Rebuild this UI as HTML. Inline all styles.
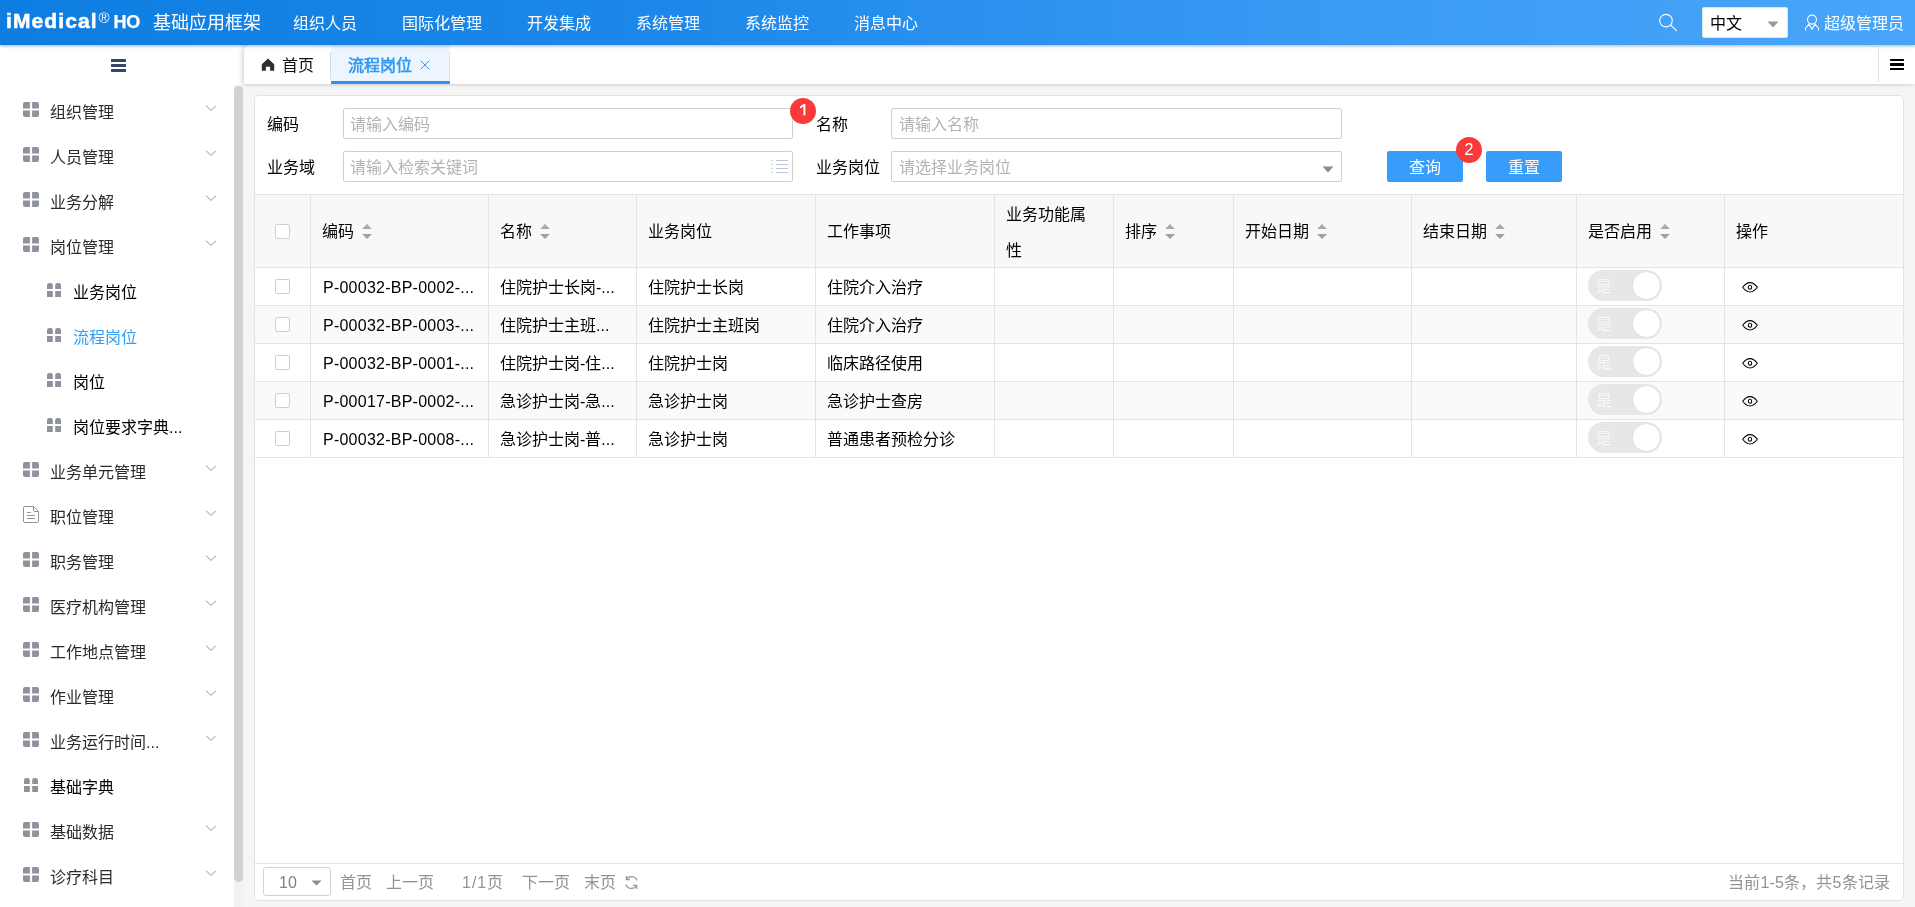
<!DOCTYPE html>
<html lang="zh-CN">
<head>
<meta charset="utf-8">
<title>iMedical HO</title>
<style>
*{box-sizing:border-box;margin:0;padding:0}
html,body{width:1915px;height:907px;overflow:hidden;background:#f5f5f5;font-family:"Liberation Sans",sans-serif;font-size:16px;color:#000}
#root{left:0;top:0;width:1915px;height:907px;will-change:transform;background:#f5f5f5}
div,span,svg{position:absolute}
.t{white-space:nowrap;line-height:20px;height:20px;font-size:16px}
#top{left:0;top:0;width:1915px;height:45px;background:linear-gradient(90deg,#0d7de1 0%,#1d88e9 35%,#3a9bf4 70%,#48a5f9 100%);box-shadow:0 1px 3px rgba(0,70,150,.4);z-index:10}
#top .t{color:#fff}
#side{left:0;top:45px;width:234px;height:862px;background:#fff}
#strack{left:234px;top:85px;width:9px;height:822px;background:#f2f2f2}
#sidex{left:234px;top:45px;width:10px;height:40px;background:#fff}
#sthumb{left:234px;top:86px;width:9px;height:796px;background:#d2d2d2;border-radius:5px}
.mi{color:#2b2b2b}
.mi.act{color:#339ef3}
#tabs{left:244px;top:45px;width:1671px;height:39px;background:#fff;border-top-left-radius:6px;box-shadow:0 1px 3px rgba(0,0,0,.10),-3px 0 5px rgba(0,0,0,.10)}
#panel{left:254px;top:95px;width:1650px;height:806px;background:#fff;border:1px solid #e3e3e3;border-radius:5px}
.inp{height:31px;border:1px solid #cfcfcf;border-radius:2px;background:#fff}
.ph{color:#b3b3b3}
.btn{height:31px;background:#379dfc;border-radius:2px;color:#fff;text-align:center;line-height:33px;font-size:16px}
.badge{width:26px;height:26px;border-radius:13px;background:#f93a3b;color:#fff;text-align:center;line-height:26px;font-size:16px;font-weight:normal}
.hl{background:#e4e4e4;height:1px}
.vl{background:#e4e4e4;width:1px}
.cb{width:15px;height:15px;border:1px solid #cfcfcf;border-radius:2px;background:#fff}
.sw{width:74px;height:31px;border-radius:16px;background:#e7e7e7}
.sw i{position:absolute;right:1px;top:1px;width:29px;height:29px;border-radius:15px;background:#fff;border:1px solid #e0e0e0}
.sw b{position:absolute;left:8px;top:7px;font-weight:normal;font-size:16px;line-height:20px;color:#f7f7f7}
.pg{color:#939393}
</style>
</head>
<body>
<div id="root">
<div id="top">
<div class="t" style="left:6px;top:8px;height:26px;line-height:26px;font-size:21px;font-weight:bold;letter-spacing:1.1px;-webkit-text-stroke:.55px #fff">iMedical</div>
<div class="t" style="left:98.6px;top:9.6px;font-size:15px;line-height:16px;height:16px">&reg;</div>
<div class="t" style="left:113.6px;top:10.5px;font-size:18px;font-weight:bold;letter-spacing:-.3px;-webkit-text-stroke:.25px #fff;line-height:22px;height:22px">HO</div>
<div class="t " style="left:153px;top:13px;font-size:18px;">基础应用框架</div>
<div class="t " style="left:293px;top:13.5px;">组织人员</div>
<div class="t " style="left:402px;top:13.5px;">国际化管理</div>
<div class="t " style="left:527px;top:13.5px;">开发集成</div>
<div class="t " style="left:636px;top:13.5px;">系统管理</div>
<div class="t " style="left:745px;top:13.5px;">系统监控</div>
<div class="t " style="left:854px;top:13.5px;">消息中心</div>
<svg style="left:1656px;top:11px" width="24" height="24" viewBox="0 0 24 24" fill="none" stroke="#fff" stroke-width="1.15" stroke-linecap="round"><circle cx="10" cy="9.6" r="6.3"/><path d="M14.7 14.2L20.6 19.7"/></svg>
<div style="left:1702px;top:7px;width:86px;height:31px;background:#fff;border-radius:2px;border:1px solid #d9e6f2"></div>
<div class="t " style="left:1710px;top:13.5px;color:#000">中文</div>
<svg style="left:1767px;top:20.6px" width="12" height="7" viewBox="0 0 12 7"><path d="M0.5 0.5H11.5L6 6.5Z" fill="#999"/></svg>
<svg style="left:1804px;top:14px" width="16" height="18" viewBox="0 0 16 18" fill="none" stroke="#fff" stroke-width="1.1" stroke-linecap="butt" stroke-linejoin="miter"><circle cx="8" cy="5.6" r="4.5"/><path d="M1.5 16.6V14.2L5 10.2L8 15.2L11 10.2L14.5 14.2V16.6"/></svg>
<div class="t " style="left:1824px;top:13.5px;">超级管理员</div>
</div>
<div id="side"></div><div id="sidex"></div><div id="strack"></div><div id="sthumb"></div>
<div style="left:111px;top:59px;width:15px;height:3px;background:#37476c;border-radius:.5px"></div>
<div style="left:111px;top:64px;width:15px;height:3px;background:#37476c;border-radius:.5px"></div>
<div style="left:111px;top:69px;width:15px;height:3px;background:#37476c;border-radius:.5px"></div>
<svg style="left:23px;top:102px" width="16" height="15" viewBox="0 0 16 15" fill="#8e929c"><path d="M0 6.4V2Q0 0 2 0H6.9V6.4Z"/><path d="M9.1 0H14Q16 0 16 2V6.4H9.1Z"/><path d="M0 8.6H6.9V15H2Q0 15 0 13Z"/><path d="M9.1 8.6H16V13Q16 15 14 15H9.1Z"/></svg>
<div class="t mi" style="left:50px;top:103px;">组织管理</div>
<svg style="left:205px;top:105px" width="12" height="7" viewBox="0 0 12 7" fill="none" stroke="#8f929b" stroke-width="1"><path d="M1.2 .7L6 5.5L10.8 .7"/></svg>
<svg style="left:23px;top:147px" width="16" height="15" viewBox="0 0 16 15" fill="#8e929c"><path d="M0 6.4V2Q0 0 2 0H6.9V6.4Z"/><path d="M9.1 0H14Q16 0 16 2V6.4H9.1Z"/><path d="M0 8.6H6.9V15H2Q0 15 0 13Z"/><path d="M9.1 8.6H16V13Q16 15 14 15H9.1Z"/></svg>
<div class="t mi" style="left:50px;top:148px;">人员管理</div>
<svg style="left:205px;top:150px" width="12" height="7" viewBox="0 0 12 7" fill="none" stroke="#8f929b" stroke-width="1"><path d="M1.2 .7L6 5.5L10.8 .7"/></svg>
<svg style="left:23px;top:192px" width="16" height="15" viewBox="0 0 16 15" fill="#8e929c"><path d="M0 6.4V2Q0 0 2 0H6.9V6.4Z"/><path d="M9.1 0H14Q16 0 16 2V6.4H9.1Z"/><path d="M0 8.6H6.9V15H2Q0 15 0 13Z"/><path d="M9.1 8.6H16V13Q16 15 14 15H9.1Z"/></svg>
<div class="t mi" style="left:50px;top:193px;">业务分解</div>
<svg style="left:205px;top:195px" width="12" height="7" viewBox="0 0 12 7" fill="none" stroke="#8f929b" stroke-width="1"><path d="M1.2 .7L6 5.5L10.8 .7"/></svg>
<svg style="left:23px;top:237px" width="16" height="15" viewBox="0 0 16 15" fill="#8e929c"><path d="M0 6.4V2Q0 0 2 0H6.9V6.4Z"/><path d="M9.1 0H14Q16 0 16 2V6.4H9.1Z"/><path d="M0 8.6H6.9V15H2Q0 15 0 13Z"/><path d="M9.1 8.6H16V13Q16 15 14 15H9.1Z"/></svg>
<div class="t mi" style="left:50px;top:238px;">岗位管理</div>
<svg style="left:205px;top:240px" width="12" height="7" viewBox="0 0 12 7" fill="none" stroke="#8f929b" stroke-width="1"><path d="M1.2 .7L6 5.5L10.8 .7"/></svg>
<svg style="left:47px;top:283px" width="14" height="14" viewBox="0 0 14 14" fill="#8e929c"><path d="M0 6V2.2Q0 0 2.2 0H3.6Q5.8 0 5.8 2.2V6Z"/><path d="M8.2 6V2.2Q8.2 0 10.4 0H11.8Q14 0 14 2.2V6Z"/><rect x="0" y="8" width="5.8" height="6"/><rect x="8.2" y="8" width="5.8" height="6"/></svg>
<div class="t mi" style="left:73px;top:283px;color:#000;">业务岗位</div>
<svg style="left:47px;top:328px" width="14" height="14" viewBox="0 0 14 14" fill="#8e929c"><path d="M0 6V2.2Q0 0 2.2 0H3.6Q5.8 0 5.8 2.2V6Z"/><path d="M8.2 6V2.2Q8.2 0 10.4 0H11.8Q14 0 14 2.2V6Z"/><rect x="0" y="8" width="5.8" height="6"/><rect x="8.2" y="8" width="5.8" height="6"/></svg>
<div class="t mi act" style="left:73px;top:328px;">流程岗位</div>
<svg style="left:47px;top:373px" width="14" height="14" viewBox="0 0 14 14" fill="#8e929c"><path d="M0 6V2.2Q0 0 2.2 0H3.6Q5.8 0 5.8 2.2V6Z"/><path d="M8.2 6V2.2Q8.2 0 10.4 0H11.8Q14 0 14 2.2V6Z"/><rect x="0" y="8" width="5.8" height="6"/><rect x="8.2" y="8" width="5.8" height="6"/></svg>
<div class="t mi" style="left:73px;top:373px;color:#000;">岗位</div>
<svg style="left:47px;top:418px" width="14" height="14" viewBox="0 0 14 14" fill="#8e929c"><path d="M0 6V2.2Q0 0 2.2 0H3.6Q5.8 0 5.8 2.2V6Z"/><path d="M8.2 6V2.2Q8.2 0 10.4 0H11.8Q14 0 14 2.2V6Z"/><rect x="0" y="8" width="5.8" height="6"/><rect x="8.2" y="8" width="5.8" height="6"/></svg>
<div class="t mi" style="left:73px;top:418px;color:#000;">岗位要求字典...</div>
<svg style="left:23px;top:462px" width="16" height="15" viewBox="0 0 16 15" fill="#8e929c"><path d="M0 6.4V2Q0 0 2 0H6.9V6.4Z"/><path d="M9.1 0H14Q16 0 16 2V6.4H9.1Z"/><path d="M0 8.6H6.9V15H2Q0 15 0 13Z"/><path d="M9.1 8.6H16V13Q16 15 14 15H9.1Z"/></svg>
<div class="t mi" style="left:50px;top:463px;">业务单元管理</div>
<svg style="left:205px;top:465px" width="12" height="7" viewBox="0 0 12 7" fill="none" stroke="#8f929b" stroke-width="1"><path d="M1.2 .7L6 5.5L10.8 .7"/></svg>
<svg style="left:23px;top:506px" width="16" height="17" viewBox="0 0 16 17" fill="none" stroke="#8f939d" stroke-width="1"><path d="M1.7 .5H10.5L15.5 5.5V15.3Q15.5 16.5 14.3 16.5H1.7Q.5 16.5 .5 15.3V1.7Q.5 .5 1.7 .5Z"/><path d="M10.5 .5V4.3Q10.5 5.5 11.7 5.5H15.5"/><path d="M4 6.5H7.8M4 9.5H12M4 12.5H12"/></svg>
<div class="t mi" style="left:50px;top:508px;">职位管理</div>
<svg style="left:205px;top:510px" width="12" height="7" viewBox="0 0 12 7" fill="none" stroke="#8f929b" stroke-width="1"><path d="M1.2 .7L6 5.5L10.8 .7"/></svg>
<svg style="left:23px;top:552px" width="16" height="15" viewBox="0 0 16 15" fill="#8e929c"><path d="M0 6.4V2Q0 0 2 0H6.9V6.4Z"/><path d="M9.1 0H14Q16 0 16 2V6.4H9.1Z"/><path d="M0 8.6H6.9V15H2Q0 15 0 13Z"/><path d="M9.1 8.6H16V13Q16 15 14 15H9.1Z"/></svg>
<div class="t mi" style="left:50px;top:553px;">职务管理</div>
<svg style="left:205px;top:555px" width="12" height="7" viewBox="0 0 12 7" fill="none" stroke="#8f929b" stroke-width="1"><path d="M1.2 .7L6 5.5L10.8 .7"/></svg>
<svg style="left:23px;top:597px" width="16" height="15" viewBox="0 0 16 15" fill="#8e929c"><path d="M0 6.4V2Q0 0 2 0H6.9V6.4Z"/><path d="M9.1 0H14Q16 0 16 2V6.4H9.1Z"/><path d="M0 8.6H6.9V15H2Q0 15 0 13Z"/><path d="M9.1 8.6H16V13Q16 15 14 15H9.1Z"/></svg>
<div class="t mi" style="left:50px;top:598px;">医疗机构管理</div>
<svg style="left:205px;top:600px" width="12" height="7" viewBox="0 0 12 7" fill="none" stroke="#8f929b" stroke-width="1"><path d="M1.2 .7L6 5.5L10.8 .7"/></svg>
<svg style="left:23px;top:642px" width="16" height="15" viewBox="0 0 16 15" fill="#8e929c"><path d="M0 6.4V2Q0 0 2 0H6.9V6.4Z"/><path d="M9.1 0H14Q16 0 16 2V6.4H9.1Z"/><path d="M0 8.6H6.9V15H2Q0 15 0 13Z"/><path d="M9.1 8.6H16V13Q16 15 14 15H9.1Z"/></svg>
<div class="t mi" style="left:50px;top:643px;">工作地点管理</div>
<svg style="left:205px;top:645px" width="12" height="7" viewBox="0 0 12 7" fill="none" stroke="#8f929b" stroke-width="1"><path d="M1.2 .7L6 5.5L10.8 .7"/></svg>
<svg style="left:23px;top:687px" width="16" height="15" viewBox="0 0 16 15" fill="#8e929c"><path d="M0 6.4V2Q0 0 2 0H6.9V6.4Z"/><path d="M9.1 0H14Q16 0 16 2V6.4H9.1Z"/><path d="M0 8.6H6.9V15H2Q0 15 0 13Z"/><path d="M9.1 8.6H16V13Q16 15 14 15H9.1Z"/></svg>
<div class="t mi" style="left:50px;top:688px;">作业管理</div>
<svg style="left:205px;top:690px" width="12" height="7" viewBox="0 0 12 7" fill="none" stroke="#8f929b" stroke-width="1"><path d="M1.2 .7L6 5.5L10.8 .7"/></svg>
<svg style="left:23px;top:732px" width="16" height="15" viewBox="0 0 16 15" fill="#8e929c"><path d="M0 6.4V2Q0 0 2 0H6.9V6.4Z"/><path d="M9.1 0H14Q16 0 16 2V6.4H9.1Z"/><path d="M0 8.6H6.9V15H2Q0 15 0 13Z"/><path d="M9.1 8.6H16V13Q16 15 14 15H9.1Z"/></svg>
<div class="t mi" style="left:50px;top:733px;">业务运行时间...</div>
<svg style="left:205px;top:735px" width="12" height="7" viewBox="0 0 12 7" fill="none" stroke="#8f929b" stroke-width="1"><path d="M1.2 .7L6 5.5L10.8 .7"/></svg>
<svg style="left:24px;top:778px" width="14" height="14" viewBox="0 0 14 14" fill="#8e929c"><path d="M0 6V2.2Q0 0 2.2 0H3.6Q5.8 0 5.8 2.2V6Z"/><path d="M8.2 6V2.2Q8.2 0 10.4 0H11.8Q14 0 14 2.2V6Z"/><rect x="0" y="8" width="5.8" height="6"/><rect x="8.2" y="8" width="5.8" height="6"/></svg>
<div class="t mi" style="left:50px;top:778px;color:#000;">基础字典</div>
<svg style="left:23px;top:822px" width="16" height="15" viewBox="0 0 16 15" fill="#8e929c"><path d="M0 6.4V2Q0 0 2 0H6.9V6.4Z"/><path d="M9.1 0H14Q16 0 16 2V6.4H9.1Z"/><path d="M0 8.6H6.9V15H2Q0 15 0 13Z"/><path d="M9.1 8.6H16V13Q16 15 14 15H9.1Z"/></svg>
<div class="t mi" style="left:50px;top:823px;">基础数据</div>
<svg style="left:205px;top:825px" width="12" height="7" viewBox="0 0 12 7" fill="none" stroke="#8f929b" stroke-width="1"><path d="M1.2 .7L6 5.5L10.8 .7"/></svg>
<svg style="left:23px;top:867px" width="16" height="15" viewBox="0 0 16 15" fill="#8e929c"><path d="M0 6.4V2Q0 0 2 0H6.9V6.4Z"/><path d="M9.1 0H14Q16 0 16 2V6.4H9.1Z"/><path d="M0 8.6H6.9V15H2Q0 15 0 13Z"/><path d="M9.1 8.6H16V13Q16 15 14 15H9.1Z"/></svg>
<div class="t mi" style="left:50px;top:868px;">诊疗科目</div>
<svg style="left:205px;top:870px" width="12" height="7" viewBox="0 0 12 7" fill="none" stroke="#8f929b" stroke-width="1"><path d="M1.2 .7L6 5.5L10.8 .7"/></svg>
<div id="tabs"></div>
<svg style="left:261px;top:58px" width="14" height="13" viewBox="0 0 14 13"><path d="M7 .6L.8 6.3V12.8H4.9V8.7H9.1V12.8H13.2V6.3Z" fill="#2f3032"/></svg>
<div class="t " style="left:282px;top:56px;color:#111;">首页</div>
<div style="left:331px;top:45px;width:119px;height:39px;background:#edf6fe"></div>
<div style="left:331px;top:81px;width:119px;height:3px;background:#2f93ef"></div>
<div style="left:330px;top:52px;width:1px;height:27px;background:#dcdcdc"></div>
<div style="left:449px;top:52px;width:1px;height:27px;background:#d9e2ea"></div>
<div class="t " style="left:348px;top:56px;color:#3399f3;font-weight:bold;">流程岗位</div>
<svg style="left:420px;top:60px" width="10" height="10" viewBox="0 0 10 10" stroke="#3399f3" stroke-width="1" fill="none"><path d="M.8 .8L9.2 9.2M9.2 .8L.8 9.2"/></svg>
<div style="left:1870px;top:46px;width:9px;height:36px;border-right:1px solid #dedede;border-top:1px solid #f0f0f0;border-top-right-radius:5px"></div>
<div style="left:1890px;top:59px;width:14px;height:2.2px;background:#000;border-radius:.5px"></div>
<div style="left:1890px;top:63.4px;width:14px;height:2.2px;background:#000;border-radius:.5px"></div>
<div style="left:1890px;top:68px;width:14px;height:2.2px;background:#000;border-radius:.5px"></div>
<div id="panel"></div>
<div class="t " style="left:267px;top:115px;">编码</div>
<div class="t " style="left:267px;top:158px;">业务域</div>
<div class="inp" style="left:343px;top:108px;width:450px"></div>
<div class="inp" style="left:343px;top:151px;width:450px"></div>
<div class="t ph" style="left:350px;top:115px;">请输入编码</div>
<div class="t ph" style="left:350px;top:158px;">请输入检索关键词</div>
<svg style="left:771px;top:159px" width="18" height="15" viewBox="0 0 18 15" stroke="#bfc6d3" stroke-width="1" fill="none"><path d="M5 1.5H17M5 5.5H17M5 9.5H17M5 13.5H17M.5 1.5H2M.5 5.5H2M.5 9.5H2M.5 13.5H2"/></svg>
<div class="t " style="left:816px;top:115px;">名称</div>
<div class="t " style="left:816px;top:158px;">业务岗位</div>
<div class="inp" style="left:891px;top:108px;width:451px"></div>
<div class="inp" style="left:891px;top:151px;width:451px"></div>
<div class="t ph" style="left:899px;top:115px;">请输入名称</div>
<div class="t ph" style="left:899px;top:158px;">请选择业务岗位</div>
<svg style="left:1322px;top:165.6px" width="12" height="7" viewBox="0 0 12 7"><path d="M.5 .5H11.5L6 6.5Z" fill="#8c8c8c"/></svg>
<div class="btn" style="left:1387px;top:151px;width:76px">查询</div>
<div class="btn" style="left:1486px;top:151px;width:76px">重置</div>
<div class="badge" style="left:790px;top:98px"><svg style="left:0;top:0" width="26" height="26" viewBox="0 0 26 26"><path d="M15.4 5.9V17.2H13.4V8.4L10 10.4V8.4L13.7 5.9Z" fill="#fff"/></svg></div>
<div class="badge" style="left:1456px;top:137px">2</div>
<div style="left:255px;top:194px;width:1648px;height:74px;background:#f8f8f8"></div>
<div style="left:255px;top:305px;width:1648px;height:38px;background:#fafafa"></div>
<div style="left:255px;top:381px;width:1648px;height:38px;background:#fafafa"></div>
<div class="hl" style="left:255px;top:194px;width:1648px"></div>
<div class="hl" style="left:255px;top:267px;width:1648px"></div>
<div class="hl" style="left:255px;top:305px;width:1648px"></div>
<div class="hl" style="left:255px;top:343px;width:1648px"></div>
<div class="hl" style="left:255px;top:381px;width:1648px"></div>
<div class="hl" style="left:255px;top:419px;width:1648px"></div>
<div class="hl" style="left:255px;top:457px;width:1648px"></div>
<div class="vl" style="left:310px;top:194px;height:263px"></div>
<div class="vl" style="left:488px;top:194px;height:263px"></div>
<div class="vl" style="left:636px;top:194px;height:263px"></div>
<div class="vl" style="left:815px;top:194px;height:263px"></div>
<div class="vl" style="left:994px;top:194px;height:263px"></div>
<div class="vl" style="left:1113px;top:194px;height:263px"></div>
<div class="vl" style="left:1233px;top:194px;height:263px"></div>
<div class="vl" style="left:1411px;top:194px;height:263px"></div>
<div class="vl" style="left:1576px;top:194px;height:263px"></div>
<div class="vl" style="left:1724px;top:194px;height:263px"></div>
<div class="t " style="left:322px;top:222px;">编码</div>
<svg style="left:362px;top:224px" width="10" height="15" viewBox="0 0 10 15"><path d="M5 0L9.9 4.9H.1Z" fill="#a8a8a8"/><path d="M5 15L9.9 10.1H.1Z" fill="#a0a0a0"/></svg>
<div class="t " style="left:500px;top:222px;">名称</div>
<svg style="left:540px;top:224px" width="10" height="15" viewBox="0 0 10 15"><path d="M5 0L9.9 4.9H.1Z" fill="#a8a8a8"/><path d="M5 15L9.9 10.1H.1Z" fill="#a0a0a0"/></svg>
<div class="t " style="left:648px;top:222px;">业务岗位</div>
<div class="t " style="left:827px;top:222px;">工作事项</div>
<div class="t " style="left:1125px;top:222px;">排序</div>
<svg style="left:1165px;top:224px" width="10" height="15" viewBox="0 0 10 15"><path d="M5 0L9.9 4.9H.1Z" fill="#a8a8a8"/><path d="M5 15L9.9 10.1H.1Z" fill="#a0a0a0"/></svg>
<div class="t " style="left:1245px;top:222px;">开始日期</div>
<svg style="left:1317px;top:224px" width="10" height="15" viewBox="0 0 10 15"><path d="M5 0L9.9 4.9H.1Z" fill="#a8a8a8"/><path d="M5 15L9.9 10.1H.1Z" fill="#a0a0a0"/></svg>
<div class="t " style="left:1423px;top:222px;">结束日期</div>
<svg style="left:1495px;top:224px" width="10" height="15" viewBox="0 0 10 15"><path d="M5 0L9.9 4.9H.1Z" fill="#a8a8a8"/><path d="M5 15L9.9 10.1H.1Z" fill="#a0a0a0"/></svg>
<div class="t " style="left:1588px;top:222px;">是否启用</div>
<svg style="left:1660px;top:224px" width="10" height="15" viewBox="0 0 10 15"><path d="M5 0L9.9 4.9H.1Z" fill="#a8a8a8"/><path d="M5 15L9.9 10.1H.1Z" fill="#a0a0a0"/></svg>
<div class="t " style="left:1736px;top:222px;">操作</div>
<div class="t " style="left:1006px;top:204.5px;">业务功能属</div>
<div class="t " style="left:1006px;top:240.5px;">性</div>
<div class="cb" style="left:275px;top:224px"></div>
<div class="cb" style="left:275px;top:279px"></div>
<div class="t " style="left:323px;top:278px;letter-spacing:.24px;">P-00032-BP-0002-...</div>
<div class="t " style="left:500px;top:278px;">住院护士长岗-...</div>
<div class="t " style="left:648px;top:278px;">住院护士长岗</div>
<div class="t " style="left:827px;top:278px;">住院介入治疗</div>
<div class="sw" style="left:1588px;top:270px"><b>是</b><i></i></div>
<svg style="left:1742px;top:282px" width="16" height="11" viewBox="0 0 16 11" fill="none" stroke="#000" stroke-width="1.05" stroke-linejoin="miter"><path d="M.7 5.3Q4.2 .6 8 .6Q11.8 .6 15.3 5.3Q11.8 10 8 10Q4.2 10 .7 5.3Z"/><ellipse cx="8" cy="5.3" rx="1.7" ry="2"/></svg>
<div class="cb" style="left:275px;top:317px"></div>
<div class="t " style="left:323px;top:316px;letter-spacing:.24px;">P-00032-BP-0003-...</div>
<div class="t " style="left:500px;top:316px;">住院护士主班...</div>
<div class="t " style="left:648px;top:316px;">住院护士主班岗</div>
<div class="t " style="left:827px;top:316px;">住院介入治疗</div>
<div class="sw" style="left:1588px;top:308px"><b>是</b><i></i></div>
<svg style="left:1742px;top:320px" width="16" height="11" viewBox="0 0 16 11" fill="none" stroke="#000" stroke-width="1.05" stroke-linejoin="miter"><path d="M.7 5.3Q4.2 .6 8 .6Q11.8 .6 15.3 5.3Q11.8 10 8 10Q4.2 10 .7 5.3Z"/><ellipse cx="8" cy="5.3" rx="1.7" ry="2"/></svg>
<div class="cb" style="left:275px;top:355px"></div>
<div class="t " style="left:323px;top:354px;letter-spacing:.24px;">P-00032-BP-0001-...</div>
<div class="t " style="left:500px;top:354px;">住院护士岗-住...</div>
<div class="t " style="left:648px;top:354px;">住院护士岗</div>
<div class="t " style="left:827px;top:354px;">临床路径使用</div>
<div class="sw" style="left:1588px;top:346px"><b>是</b><i></i></div>
<svg style="left:1742px;top:358px" width="16" height="11" viewBox="0 0 16 11" fill="none" stroke="#000" stroke-width="1.05" stroke-linejoin="miter"><path d="M.7 5.3Q4.2 .6 8 .6Q11.8 .6 15.3 5.3Q11.8 10 8 10Q4.2 10 .7 5.3Z"/><ellipse cx="8" cy="5.3" rx="1.7" ry="2"/></svg>
<div class="cb" style="left:275px;top:393px"></div>
<div class="t " style="left:323px;top:392px;letter-spacing:.24px;">P-00017-BP-0002-...</div>
<div class="t " style="left:500px;top:392px;">急诊护士岗-急...</div>
<div class="t " style="left:648px;top:392px;">急诊护士岗</div>
<div class="t " style="left:827px;top:392px;">急诊护士查房</div>
<div class="sw" style="left:1588px;top:384px"><b>是</b><i></i></div>
<svg style="left:1742px;top:396px" width="16" height="11" viewBox="0 0 16 11" fill="none" stroke="#000" stroke-width="1.05" stroke-linejoin="miter"><path d="M.7 5.3Q4.2 .6 8 .6Q11.8 .6 15.3 5.3Q11.8 10 8 10Q4.2 10 .7 5.3Z"/><ellipse cx="8" cy="5.3" rx="1.7" ry="2"/></svg>
<div class="cb" style="left:275px;top:431px"></div>
<div class="t " style="left:323px;top:430px;letter-spacing:.24px;">P-00032-BP-0008-...</div>
<div class="t " style="left:500px;top:430px;">急诊护士岗-普...</div>
<div class="t " style="left:648px;top:430px;">急诊护士岗</div>
<div class="t " style="left:827px;top:430px;">普通患者预检分诊</div>
<div class="sw" style="left:1588px;top:422px"><b>是</b><i></i></div>
<svg style="left:1742px;top:434px" width="16" height="11" viewBox="0 0 16 11" fill="none" stroke="#000" stroke-width="1.05" stroke-linejoin="miter"><path d="M.7 5.3Q4.2 .6 8 .6Q11.8 .6 15.3 5.3Q11.8 10 8 10Q4.2 10 .7 5.3Z"/><ellipse cx="8" cy="5.3" rx="1.7" ry="2"/></svg>
<div class="hl" style="left:255px;top:863px;width:1648px"></div>
<div style="left:263px;top:867px;width:68px;height:29px;border:1px solid #d2d2d2;border-radius:3px;background:#fff"></div>
<div class="t " style="left:279px;top:873px;color:#808080;">10</div>
<svg style="left:311px;top:879.7px" width="11" height="6" viewBox="0 0 11 6"><path d="M.5 .5H10.5L5.5 5.6Z" fill="#8c8c8c"/></svg>
<div class="t pg" style="left:340px;top:873px;">首页</div>
<div class="t pg" style="left:386px;top:873px;">上一页</div>
<div class="t pg" style="left:462px;top:873px;"><span style="position:static;letter-spacing:1px">1/1</span>页</div>
<div class="t pg" style="left:522px;top:873px;">下一页</div>
<div class="t pg" style="left:584px;top:873px;">末页</div>
<svg style="left:623.6px;top:874.8px" width="15" height="15" viewBox="0 0 14 14" fill="none" stroke="#9a9a9a" stroke-width="1.2"><path d="M12.3 5.2A5.6 5.6 0 0 0 2.2 4.2"/><path d="M1.7 8.8A5.6 5.6 0 0 0 11.8 9.8"/><path d="M2.2 1V4.4H5.6" /><path d="M11.8 13V9.6H8.4"/></svg>
<div class="t pg" style="right:25px;top:873px;letter-spacing:.15px">当前1-5条，共5条记录</div>
</div>
</body>
</html>
